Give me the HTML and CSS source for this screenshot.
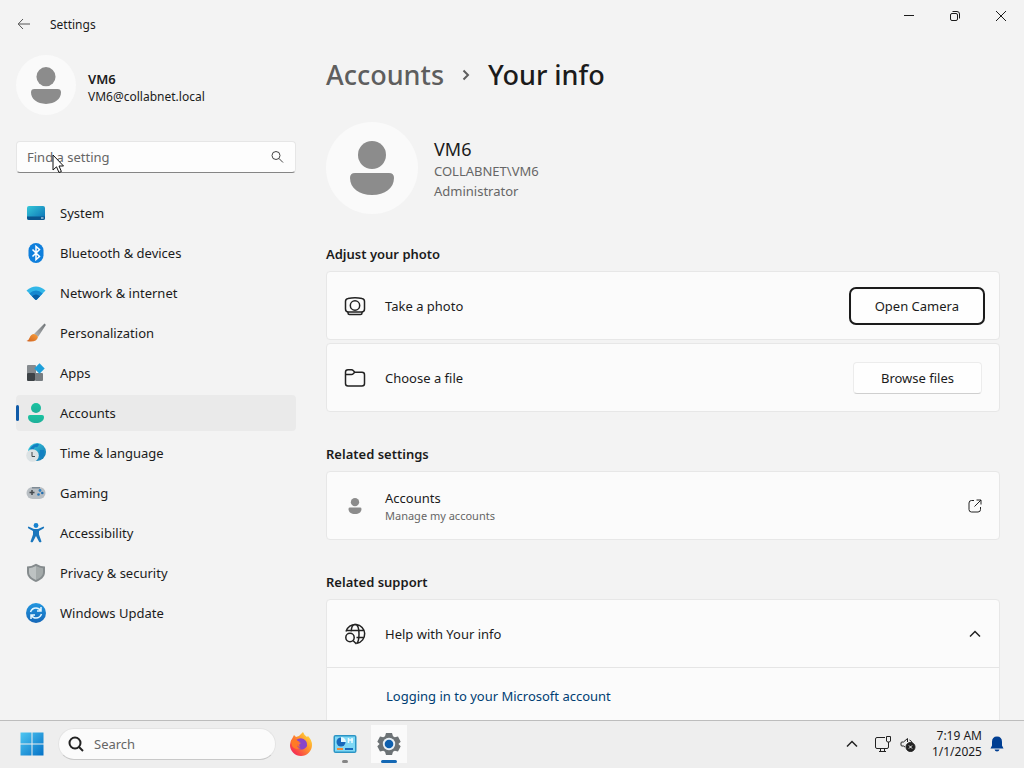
FILE: index.html
```html
<!DOCTYPE html>
<html lang="en">
<head>
<meta charset="utf-8">
<title>Settings</title>
<meta name="viewport" content="width=device-width, initial-scale=1.0">
<link rel="stylesheet" href="styles.css">
</head>
<body>
<svg class="defs" width="0" height="0" aria-hidden="true">
  <defs>
    <linearGradient id="sys" x1="0" y1="0" x2="1" y2="1"><stop offset="0" stop-color="#35c8d8"/><stop offset="1" stop-color="#0a6db5"/></linearGradient>
    <linearGradient id="handle" x1="1" y1="0" x2="0" y2="1"><stop offset="0" stop-color="#6d7275"/><stop offset="1" stop-color="#b6b8ba"/></linearGradient>
    <linearGradient id="orange" x1="1" y1="0" x2="0" y2="1"><stop offset="0" stop-color="#f9a03c"/><stop offset="1" stop-color="#cf6120"/></linearGradient>
    <linearGradient id="teal" x1="0" y1="0" x2="0" y2="1"><stop offset="0" stop-color="#19c3a0"/><stop offset="1" stop-color="#1faf9a"/></linearGradient>
    <linearGradient id="globe" x1="0" y1="0" x2="1" y2="1"><stop offset="0" stop-color="#3ad0e0"/><stop offset="1" stop-color="#0f6fae"/></linearGradient>
    <linearGradient id="blue" x1="0" y1="0" x2="0" y2="1"><stop offset="0" stop-color="#2196e0"/><stop offset="1" stop-color="#1668b8"/></linearGradient>
    <linearGradient id="win" x1="0" y1="0" x2="1" y2="1"><stop offset="0" stop-color="#4fc7f2"/><stop offset="1" stop-color="#0471c6"/></linearGradient>
    <linearGradient id="fox" x1="1" y1="0" x2="0" y2="1"><stop offset="0" stop-color="#fff04a"/><stop offset=".4" stop-color="#ff9a2a"/><stop offset=".8" stop-color="#f83a4c"/><stop offset="1" stop-color="#e2227a"/></linearGradient>
    <symbol id="person" viewBox="0 0 44 54"><circle cx="22" cy="14" r="14"/><path d="M5 32h34q5 0 5 5c0 10-9 17-22 17S0 47 0 37q0-5 5-5z"/></symbol>
  </defs>
</svg>

<div class="window">
  <header class="titlebar">
    <button class="back" aria-label="Back"><svg width="14" height="12" viewBox="0 0 14 12"><path d="M13 6H1.500M6 1 1.200 6 6 11"/></svg></button>
    <span class="app-name">Settings</span>
    <div class="caption">
      <button aria-label="Minimize"><svg width="12" height="12" viewBox="0 0 12 12"><path d="M1 5.500h10"/></svg></button>
      <button aria-label="Restore"><svg width="12" height="12" viewBox="0 0 12 12"><rect x="1.500" y="3.500" width="7" height="7" rx="1.500"/><path d="M3.500 1.500H8q2.500 0 2.500 2.500v4.500"/></svg></button>
      <button aria-label="Close"><svg width="12" height="12" viewBox="0 0 12 12"><path d="m1 1 10 10M11 1 1 11"/></svg></button>
    </div>
  </header>

  <div class="content">
    <aside class="sidebar">
      <a class="profile" href="#profile">
        <span class="avatar"><svg width="30" height="37"><use href="#person"/></svg></span>
        <span class="profile-text"><strong>VM6</strong><small>VM6@collabnet.local</small></span>
      </a>
      <div class="search">
        <input type="text" placeholder="Find a setting" aria-label="Find a setting">
        <svg class="search-icon" width="14" height="14" viewBox="0 0 14 14"><circle cx="6" cy="5.500" r="4"/><path d="m9 8.500 4 4"/></svg>
        <svg class="pointer" width="12" height="20" viewBox="0 0 12 20"><path d="M1 1v15l3.500-3.200L7 18.500l2.400-1L7 12h4.500z"/></svg>
      </div>
      <nav class="nav">
        <a href="#system"><svg width="20" height="20" viewBox="0 0 20 20"><rect x="1" y="3" width="18" height="14" rx="2" fill="url(#sys)"/><path d="M1 13.500h18V15q0 2-2 2H3q-2 0-2-2z" fill="#0b568f"/><path d="M15 15h2.500" stroke="#e8f8ff"/></svg>System</a>
        <a href="#bluetooth"><svg width="20" height="20" viewBox="0 0 20 20"><rect x="2.500" width="15" height="20" rx="7.500" fill="#0f7fdc"/><path d="m6.500 6.500 7 7L10 16.500v-13l3.500 3-7 7" fill="none" stroke="#fff" stroke-width="1.500"/></svg>Bluetooth &amp; devices</a>
        <a href="#network"><svg width="20" height="20" viewBox="0 0 20 20"><path d="M.5 7.500Q10-.5 19.500 7.500L10.800 16.600q-.8.800-1.600 0z" fill="#32b7e8"/><path d="M3.300 10.400q6.700-5.700 13.400 0l-5.900 6.200q-.8.800-1.600 0z" fill="#1688d0"/><path d="M6 13.200q4-3.500 8 0l-3.200 3.400q-.8.800-1.600 0z" fill="#0a5fa6"/></svg>Network &amp; internet</a>
        <a href="#personalization"><svg width="20" height="20" viewBox="0 0 20 20"><path d="M18.500.5q1.500.5 1 2L12 14 8 11z" fill="url(#handle)"/><path d="M8 11q3 .5 4 3-1.500 6-11.500 4Q3 17 3.700 14.500 5 11 8 11z" fill="url(#orange)"/></svg>Personalization</a>
        <a href="#apps"><svg width="20" height="20" viewBox="0 0 20 20"><rect x="1" y="2" width="9" height="9" rx="1" fill="#858a8e"/><rect x="1" y="10" width="8" height="8" rx="1" fill="#3d4246"/><rect x="9" y="10" width="8" height="8" rx="1" fill="#777d81"/><path d="m13.500.3 5.200 5.200-5.200 5.200-5.200-5.200z" fill="#1d9fda"/></svg>Apps</a>
        <a class="selected" href="#accounts" aria-current="page"><svg width="20" height="20" viewBox="0 0 20 20"><circle cx="10" cy="5" r="5" fill="url(#teal)"/><path d="M4 12h12q2 0 2 2c0 4-4 6-8 6s-8-2-8-6q0-2 2-2z" fill="url(#teal)"/></svg>Accounts</a>
        <a href="#time"><svg width="20" height="20" viewBox="0 0 20 20"><circle cx="11" cy="9" r="9" fill="url(#globe)"/><path d="M5 4q4-4 8-3-1 4-4 3L7 7 4 6zM14 7h4v4l-2 4-3-2z" fill="#1280c2"/><circle cx="6.500" cy="12.500" r="6.300" fill="#dce2e4"/><path d="M6 9v4.500h3" fill="none" stroke="#42474a"/></svg>Time &amp; language</a>
        <a href="#gaming"><svg width="20" height="20" viewBox="0 0 20 20"><rect x=".5" y="4" width="19" height="12" rx="6" fill="#b8bec3"/><path d="M6 4h8v1.500H6z" fill="#7f8b94"/><path d="M3.500 9.500h5M6 7v5" stroke="#43494e" stroke-width="1.500"/><circle cx="14" cy="7.500" r="1.400" fill="#2f80c0"/><circle cx="16.300" cy="10" r="1.300" fill="#2871b0"/><circle cx="12.500" cy="11.500" r="1.300" fill="#2878ba"/></svg>Gaming</a>
        <a href="#accessibility"><svg width="20" height="20" viewBox="0 0 20 20"><circle cx="10" cy="2.500" r="2.400" fill="#1682cf"/><path d="M2.400 3.600 8 6h4l5.600-2.400q1.200 1-.1 2L13 8v3.500l2.500 7q-1 1.500-2.300.4L10 13l-3.200 5.900q-1.300 1.100-2.300-.4l2.500-7V8L2.500 5.600q-1.300-1-.1-2z" fill="#1976bd"/></svg>Accessibility</a>
        <a href="#privacy"><svg width="20" height="20" viewBox="0 0 20 20"><path d="M10 .8q4 2.700 9 2.700V9c0 5-4 8-9 10-5-2-9-5-9-10V3.500q5 0 9-2.700z" fill="#858b8d"/><path d="M10 3q3.500 2 7 2.200V9c0 4-3 6.200-7 8z" fill="#a4aaaa"/><path d="M10 3q-3.500 2-7 2.200V9c0 4 3 6.200 7 8z" fill="#bdc2c2"/></svg>Privacy &amp; security</a>
        <a href="#update"><svg width="20" height="20" viewBox="0 0 20 20"><circle cx="10" cy="10" r="10" fill="url(#blue)"/><path d="M4.500 9Q6 5 10 5q3 0 5 3m0-4v4h-4M15.500 11Q14 15 10 15q-3 0-5-3m0 4v-4h4" fill="none" stroke="#e4f7ff" stroke-width="1.500"/></svg>Windows Update</a>
      </nav>
    </aside>

    <main class="main">
      <h1 class="crumbs">
        <a href="#accounts">Accounts</a>
        <svg width="8" height="12" viewBox="0 0 8 12"><path d="m1.500 1.500 4.500 4.500-4.500 4.500"/></svg>
        <span>Your info</span>
      </h1>
      <div class="user">
        <span class="avatar avatar-large"><svg width="44" height="54"><use href="#person"/></svg></span>
        <div>
          <p class="user-name">VM6</p>
          <p class="user-detail">COLLABNET\VM6</p>
          <p class="user-detail">Administrator</p>
        </div>
      </div>

      <section class="group">
        <h2>Adjust your photo</h2>
        <div class="card row">
          <svg class="line-icon" width="22" height="22" viewBox="0 0 22 22"><path d="M4 3.500q7-1.500 14 0 2.500.3 2.500 3v7.500q0 3-3 3h-13q-3 0-3-3V6.500q0-2.700 2.500-3z"/><circle cx="11" cy="10.500" r="4.700"/><path d="M4 17v1q0 1.500 1.500 1.500h11q1.500 0 1.500-1.500v-1"/></svg>
          <span class="row-text">Take a photo</span>
          <button class="button focused">Open Camera</button>
        </div>
        <div class="card row">
          <svg class="line-icon" width="22" height="22" viewBox="0 0 22 22"><path d="M1.500 16.500V5Q1.500 2.700 4 2.700h3.500q1 0 1.700.8l1.600 1.700H18q2.500 0 2.500 2.500v8.800q0 2.500-2.500 2.500H4q-2.500 0-2.500-2.500zM1.500 7.500h6q1 0 1.700-.8l1.600-1.500"/></svg>
          <span class="row-text">Choose a file</span>
          <button class="button">Browse files</button>
        </div>
      </section>

      <section class="group">
        <h2>Related settings</h2>
        <a class="card row" href="#manage">
          <svg class="small-person" width="22" height="16"><use href="#person"/></svg>
          <span class="row-text">Accounts<small>Manage my accounts</small></span>
          <svg class="line-icon end-icon" width="14" height="14" viewBox="0 0 14 14"><path d="M6 1.500H3.500Q1 1.500 1 4v6.500Q1 13 3.500 13H10q2.500 0 2.500-2.500V8M8.500 1H13v4.500M13 1 6.500 7.500"/></svg>
        </a>
      </section>

      <section class="group">
        <h2>Related support</h2>
        <div class="card">
          <button class="row expander" aria-expanded="true">
            <svg class="line-icon" width="22" height="22" viewBox="0 0 22 22"><path d="M2 8.500A9.500 9.500 0 1 1 13 20.300M2.500 7.500h17M12.500 14.500h7M7.200 8.500Q7.500 1.500 11 1.500c2.500 0 4 4 4 9.500 0 5-1 8.500-2.500 9.300"/><circle cx="6" cy="14.500" r="4.200"/><path d="m9.200 17.700 3.300 3.300"/></svg>
            <span class="row-text">Help with Your info</span>
            <svg class="line-icon chevron" width="14" height="14" viewBox="0 0 14 14"><path d="m2 9.500 5-5 5 5"/></svg>
          </button>
          <div class="help-link"><a href="#login">Logging in to your Microsoft account</a></div>
        </div>
      </section>
    </main>
  </div>
</div>

<footer class="taskbar">
  <button class="task" aria-label="Start"><svg width="24" height="24" viewBox="0 0 24 24"><path d="M.5.500h11v11H.5zM12.500.500h11v11h-11zM.5 12.500h11v11H.5zM12.500 12.500h11v11h-11z" fill="url(#win)"/></svg></button>
  <label class="task-search">
    <svg width="16" height="16" viewBox="0 0 16 16"><circle cx="7" cy="7" r="5.500"/><path d="m11 11 4 4"/></svg>
    <input type="text" placeholder="Search" aria-label="Search">
  </label>
  <button class="task" aria-label="Firefox"><svg width="24" height="24" viewBox="0 0 24 24"><path d="M3.500 6 5 3l2 2 3-1 4-4q1 3 4 5l1-1q4 4 4 9a11 11 0 0 1-22 0q0-4 2.500-7z" fill="url(#fox)"/><path d="M7 8q6-4 10 1 3 5-2 8-6 2-8-3l4 1q-2-3 1-4-3 0-5-3z" fill="#8a45c8"/><path d="M2 9q2-3 5-2 1 2 4 3-3 1-3 3 0 3 4 3-6 3-9-2z" fill="#ff7a26"/></svg></button>
  <button class="task running" aria-label="Control Panel"><svg width="24" height="24" viewBox="0 0 24 24"><rect x=".5" y="3" width="23" height="18" rx="2" fill="#2b94c4"/><rect x="2" y="4.500" width="20" height="15" fill="#7fd8f5"/><circle cx="8" cy="10" r="4.500" fill="#1769bc"/><path d="M8 10V5a5 5 0 0 1 5 5z" fill="#e4faff"/><path d="M15.500 6v5M19 6v5M15 8h5" stroke="#eefaff" stroke-width="1.500"/><path d="M4 17h6" stroke="#f18b35" stroke-width="2"/><path d="M12 17h8" stroke="#1769bc" stroke-width="2"/></svg></button>
  <button class="task active" aria-label="Settings"><svg width="24" height="24" viewBox="0 0 24 24"><path d="m9 1 6 0 1 3.200 1.800 1L21 4.500l2.700 5.200L21.400 12l2.300 2.300-2.700 5.200-3.200-.7-1.800 1L15 23H9l-1-3.200-1.800-1-3.200.7-2.700-5.200L2.600 12 .3 9.700 3 4.500l3.200.7 1.800-1z" fill="#6c7275"/><circle cx="12" cy="12" r="6.200" fill="#e9f0f5"/><circle cx="12" cy="12" r="4.300" fill="#0d5fae"/></svg></button>
  <div class="tray">
    <button class="chevron" aria-label="Show hidden icons"><svg width="12" height="12" viewBox="0 0 12 12"><path d="m1 8.500 5-5 5 5"/></svg></button>
    <button class="status" aria-label="Network and sound">
      <svg width="18" height="18" viewBox="0 0 18 18"><path d="M11 2.500H3q-1.500 0-1.500 1.500v8q0 1.500 1.500 1.500h10q1.500 0 1.500-1.500V8M5 16.500h7M6.500 13.500v3M10.500 13.500v3M12.500 1.500h4V6q0 1-2 1t-2-1zM14.500 7v2"/></svg>
      <svg width="16" height="16" viewBox="0 0 16 16"><path d="M5 11 3.500 10H2q-1 0-1-1V7q0-1 1-1h1.500L7.500 2.500V6M9.500 4Q12 5 12 7"/><circle class="badge" cx="10.500" cy="11" r="4.500"/><path class="cross" d="m9 9.500 3 3m0-3-3 3"/></svg>
    </button>
    <button class="clock"><time>7:19 AM<br>1/1/2025</time></button>
    <button aria-label="Notifications"><svg width="14" height="16" viewBox="0 0 14 16"><path class="bell" d="M7 .5q5 0 5 5.500v3.500l1.500 3H.5L2 9.500V6Q2 .5 7 .5zM4.500 13.500h5Q9 15.500 7 15.500t-2.500-2z"/></svg></button>
  </div>
</footer>
</body>
</html>
```
FILE: styles.css
```css
* {
  box-sizing: border-box;
}

body {
  display: flex;
  flex-direction: column;
  height: 100vh;
  margin: 0;
  overflow: hidden;
  background: #f3f3f3;
  color: #1b1b1b;
  font-family: "Noto Sans", "Open Sans", sans-serif;
  font-size: 13px;
  line-height: 20px;
}

h1, h2, p {
  margin: 0;
}

a {
  color: inherit;
  text-decoration: none;
}

button, input {
  font: inherit;
  color: inherit;
}

button {
  padding: 0;
  border: 0;
  background: none;
}

svg {
  flex: none;
}

.defs {
  position: absolute;
}

/* window */
.window {
  flex: 1;
  min-height: 0;
  overflow: hidden;
}

.titlebar {
  display: flex;
  align-items: center;
  height: 48px;
}

.titlebar svg {
  display: block;
  margin: auto;
  fill: none;
  stroke: #1b1b1b;
}

.back {
  width: 48px;
}

.titlebar .back svg {
  stroke: #555;
}

.app-name {
  margin-left: 2px;
  padding-top: 2px;
  font-size: 12px;
}

.caption {
  display: flex;
  align-self: flex-start;
  margin-left: auto;
}

.caption button {
  width: 46px;
  height: 32px;
}

.content {
  display: grid;
  grid-template-columns: 280px 1fr;
  gap: 30px;
  padding: 7px 24px 0 16px;
}

/* sidebar */
.profile {
  display: flex;
  align-items: center;
  gap: 12px;
}

.profile-text {
  display: flex;
  flex-direction: column;
  padding-top: 6px;
  line-height: 18px;
}

.profile strong {
  font-weight: 600;
}

.profile small {
  font-size: 12px;
}

.avatar {
  display: flex;
  align-items: center;
  justify-content: center;
  width: 60px;
  height: 60px;
  border-radius: 50%;
  background: #fafafa;
  fill: #8c8c8c;
}

.avatar-large {
  width: 92px;
  height: 92px;
}

.search {
  position: relative;
  display: flex;
  align-items: center;
  height: 32px;
  margin: 26px 0 22px;
  padding: 0 11px 0 10px;
  border: 1px solid #e6e6e6;
  border-bottom-color: #858585;
  border-radius: 4px;
  background: #fdfdfd;
}

.search input, .task-search input {
  flex: 1;
  min-width: 0;
  padding: 0;
  border: 0;
  outline: 0;
  background: none;
}

input::placeholder {
  color: #666;
  opacity: 1;
}

.search-icon {
  fill: none;
  stroke: #444;
}

.pointer {
  position: absolute;
  top: 12px;
  left: 35px;
  fill: #fff;
  stroke: #111;
}

.nav {
  display: flex;
  flex-direction: column;
  gap: 4px;
}

.nav a {
  display: flex;
  align-items: center;
  gap: 14px;
  height: 36px;
  padding-left: 10px;
  border-radius: 4px;
  line-height: 22px;
}

.nav .selected {
  position: relative;
  background: #eaeaea;
}

.selected::before {
  content: "";
  position: absolute;
  left: 0;
  width: 3px;
  height: 16px;
  border-radius: 2px;
  background: #0f5aa8;
}

/* main */
.crumbs {
  display: flex;
  align-items: center;
  gap: 18px;
  height: 40px;
  font-size: 27px;
  font-weight: 500;
  line-height: 40px;
}

.crumbs a {
  color: #5e5e5e;
}

.crumbs svg {
  fill: none;
  stroke: #5e5e5e;
  stroke-width: 2;
}

.user {
  display: flex;
  align-items: center;
  gap: 16px;
  margin: 27px 0 30px;
}

.user-name {
  padding-top: 2px;
  font-size: 18px;
  line-height: 24px;
}

.user-detail {
  color: #666;
}

.group {
  display: flex;
  flex-direction: column;
  gap: 3px;
  margin-bottom: 32px;
}

.group h2 {
  margin-bottom: 4px;
  font-size: 13px;
  font-weight: 600;
  line-height: 20px;
}

.card {
  border: 1px solid #e7e7e7;
  border-radius: 4px;
  background: #fbfbfb;
}

.row {
  display: flex;
  align-items: center;
  gap: 19px;
  width: 100%;
  min-height: 68px;
  padding: 0 17px;
}

.card.row {
  min-height: 69px;
}

.row-text {
  flex: 1;
  text-align: left;
}

.row-text small {
  display: block;
  color: #666;
  font-size: 11px;
  line-height: 16px;
}

.line-icon {
  fill: none;
  stroke: #222;
  stroke-width: 1.500;
}

.end-icon {
  stroke-width: 1;
}

.small-person {
  fill: #8c8c8c;
}

.button {
  height: 32px;
  padding: 0 27px;
  border: 1px solid #ececec;
  border-bottom-color: #cfcfcf;
  border-radius: 4px;
  background: #fefefe;
}

.focused {
  padding: 0 22px;
  border-color: #fefefe;
  outline: 2px solid #1b1b1b;
  outline-offset: 1px;
}

.expander {
  border-bottom: 1px solid #e5e5e5;
}

.help-link {
  padding: 18px 59px;
  color: #003e73;
}

/* taskbar */
.taskbar {
  display: flex;
  align-items: center;
  height: 48px;
  padding: 0 20px 1px 10px;
  border-top: 1px solid #bdbdbd;
  background: #eee;
}

.task {
  position: relative;
  display: flex;
  align-items: center;
  justify-content: center;
  width: 44px;
  height: 38px;
}

.task-search {
  display: flex;
  align-items: center;
  gap: 10px;
  width: 218px;
  height: 32px;
  margin: 0 3px 0 4px;
  padding: 0 9px;
  border: 1px solid #e4e4e4;
  border-bottom-color: #c9c9c9;
  border-radius: 16px;
  background: #fbfbfb;
}

.task-search svg {
  fill: none;
  stroke: #222;
  stroke-width: 2;
}

.running::after, .active::after {
  content: "";
  position: absolute;
  bottom: 0;
  width: 6px;
  height: 3px;
  border-radius: 2px;
  background: #858585;
}

.active {
  background: linear-gradient(#fafafa, #fafafa) center / 36px 100% no-repeat;
}

.active::after {
  width: 16px;
  background: #1468b4;
}

.tray {
  display: flex;
  align-items: center;
  gap: 16px;
  margin-left: auto;
}

.tray svg {
  display: block;
  fill: none;
  stroke: #222;
}

.tray .chevron svg {
  stroke-width: 1.500;
}

.status {
  display: flex;
  align-items: center;
  gap: 8px;
}

.tray .badge {
  fill: #222;
}

.tray .cross {
  stroke: #fff;
}

.clock {
  font-size: 12px;
  line-height: 16px;
  text-align: right;
}

.tray .bell {
  fill: #003e92;
  stroke: none;
}

.tray button:last-child {
  margin-left: -8px;
}
```
